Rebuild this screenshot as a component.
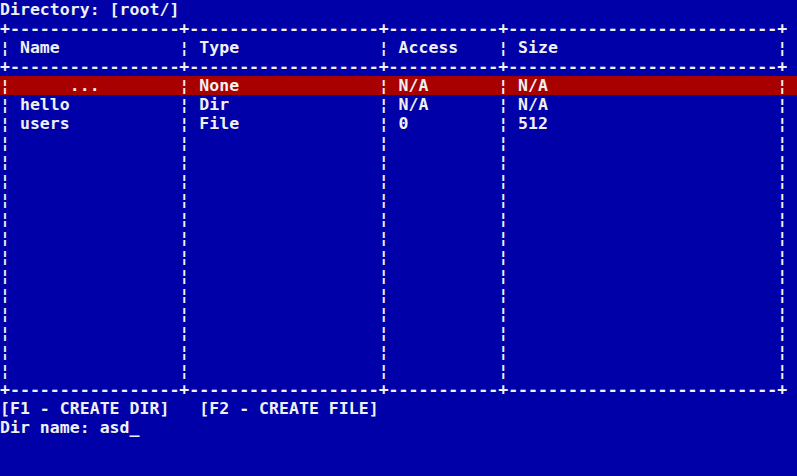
const widths = [17, 19, 11, 27]

// one table line, text padded into each column
function row(cells: string[]) {
  return "¦" + cells.map((c, i) => (" " + c).padEnd(widths[i]) + "¦").join("")
}

const border = "+" + widths.map((w) => "-".repeat(w) + "+").join("")

const files = [
  { name: "     ...", type: "None", access: "N/A", size: "N/A", selected: true },
  { name: "hello", type: "Dir", access: "N/A", size: "N/A" },
  { name: "users", type: "File", access: "0", size: "512" },
]

export default function App() {
  const lines: { text: string; selected?: boolean }[] = [
    { text: "Directory: [root/]" },
    { text: border },
    { text: row(["Name", "Type", "Access", "Size"]) },
    { text: border },
    ...files.map((f) => ({
      text: row([f.name, f.type, f.access, f.size]),
      selected: f.selected,
    })),
  ]
  while (lines.length < 20) lines.push({ text: row(["", "", "", ""]) })
  lines.push({ text: border })
  lines.push({ text: "[F1 - CREATE DIR]   [F2 - CREATE FILE]" })
  lines.push({ text: "Dir name: asd_" })
  lines.push({ text: "" })
  lines.push({ text: "" })

  return (
    <div className="w-[797px] h-[476px] bg-[#0000a8] text-[#f0f0f0] font-['DejaVu_Sans_Mono','Liberation_Mono',monospace] font-bold text-[16.5px] tracking-[0.03px]">
      {lines.map((l, i) => (
        <div
          key={i}
          className={`h-[19px] leading-[19px] whitespace-pre ${l.selected ? "bg-[#a80000]" : ""}`}
        >
          {l.text}
        </div>
      ))}
    </div>
  )
}
